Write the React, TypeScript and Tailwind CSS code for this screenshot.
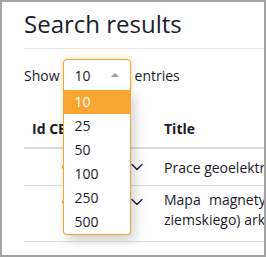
import { ChevronDown } from "lucide-react";

const options = ["10", "25", "50", "100", "250", "500"];

export default function App() {
  return (
    <div className="relative h-[257px] w-[266px] overflow-hidden border-2 border-[#a3a3a3] bg-white font-['Open_Sans',sans-serif] text-[#1b1b2b]">
      <div className="pl-[22px]">
        <h1 className="pt-[5px] text-[24px] leading-[34px]">Search results</h1>
        <div className="mt-[7px] h-px bg-[#e6e6e6]" />

        {/* SHOW ENTRIES */}
        <div className="mt-[10px] flex items-center text-[14px]">
          <span className="mr-[3px]">Show</span>
          <div className="relative">
            <div className="flex h-[32px] w-[68px] items-center justify-between rounded-t-[4px] border border-[#f5a532] bg-white pl-[11px] pr-[11px] shadow-[0_0_5px_rgba(245,165,50,0.45)]">
              <span>10</span>
              <span className="h-0 w-0 border-x-[4px] border-b-[4px] border-x-transparent border-b-[#9a9a9a]" />
            </div>

            {/* DROPDOWN */}
            <ul className="absolute left-0 top-[31px] z-20 w-[68px] overflow-hidden rounded-b-[4px] border border-t-0 border-[#f5a532] bg-white shadow-[4px_6px_12px_rgba(0,0,0,0.18)]">
              {options.map((o, i) => (
                <li
                  key={o}
                  className={
                    i === 0
                      ? "h-[24px] bg-[#f9a633] pl-[11px] leading-[24px] text-white"
                      : "h-[24px] pl-[11px] leading-[24px]"
                  }
                >
                  {o}
                </li>
              ))}
            </ul>
          </div>
          <span className="ml-[4px]">entries</span>
        </div>

        {/* TABLE */}
        <div className="mt-[19px] w-[320px] text-[14px]">
          <div className="flex h-[39px] items-center border-b-2 border-[#dddddd] font-bold">
            <div className="w-[140px] pl-[8px]">Id CEBI</div>
            <div>Title</div>
          </div>

          <div className="flex h-[37px] items-center border-b border-[#dddddd]">
            <div className="flex w-[140px] items-center justify-end pr-[17px]">
              <span className="mr-[62px] h-[4px] w-[3px] rounded-full bg-[#f5a532]" />
              <ChevronDown size={20} strokeWidth={1.6} className="text-[#1b1b4b]" />
            </div>
            <div className="whitespace-nowrap">Prace geoelektryczne</div>
          </div>

          <div className="flex h-[56px] items-start border-b border-[#dddddd] pt-[4px]">
            <div className="flex w-[140px] items-center justify-end pr-[17px] pt-[2px]">
              <span className="mr-[62px] h-[4px] w-[3px] rounded-full bg-[#f5a532]" />
              <ChevronDown size={20} strokeWidth={1.6} className="text-[#1b1b4b]" />
            </div>
            <div className="w-[172px] leading-[20px] [text-align:justify]">
              Mapa magnetyczna (pola ziemskiego) arkusza
            </div>
          </div>
        </div>
      </div>
    </div>
  );
}
